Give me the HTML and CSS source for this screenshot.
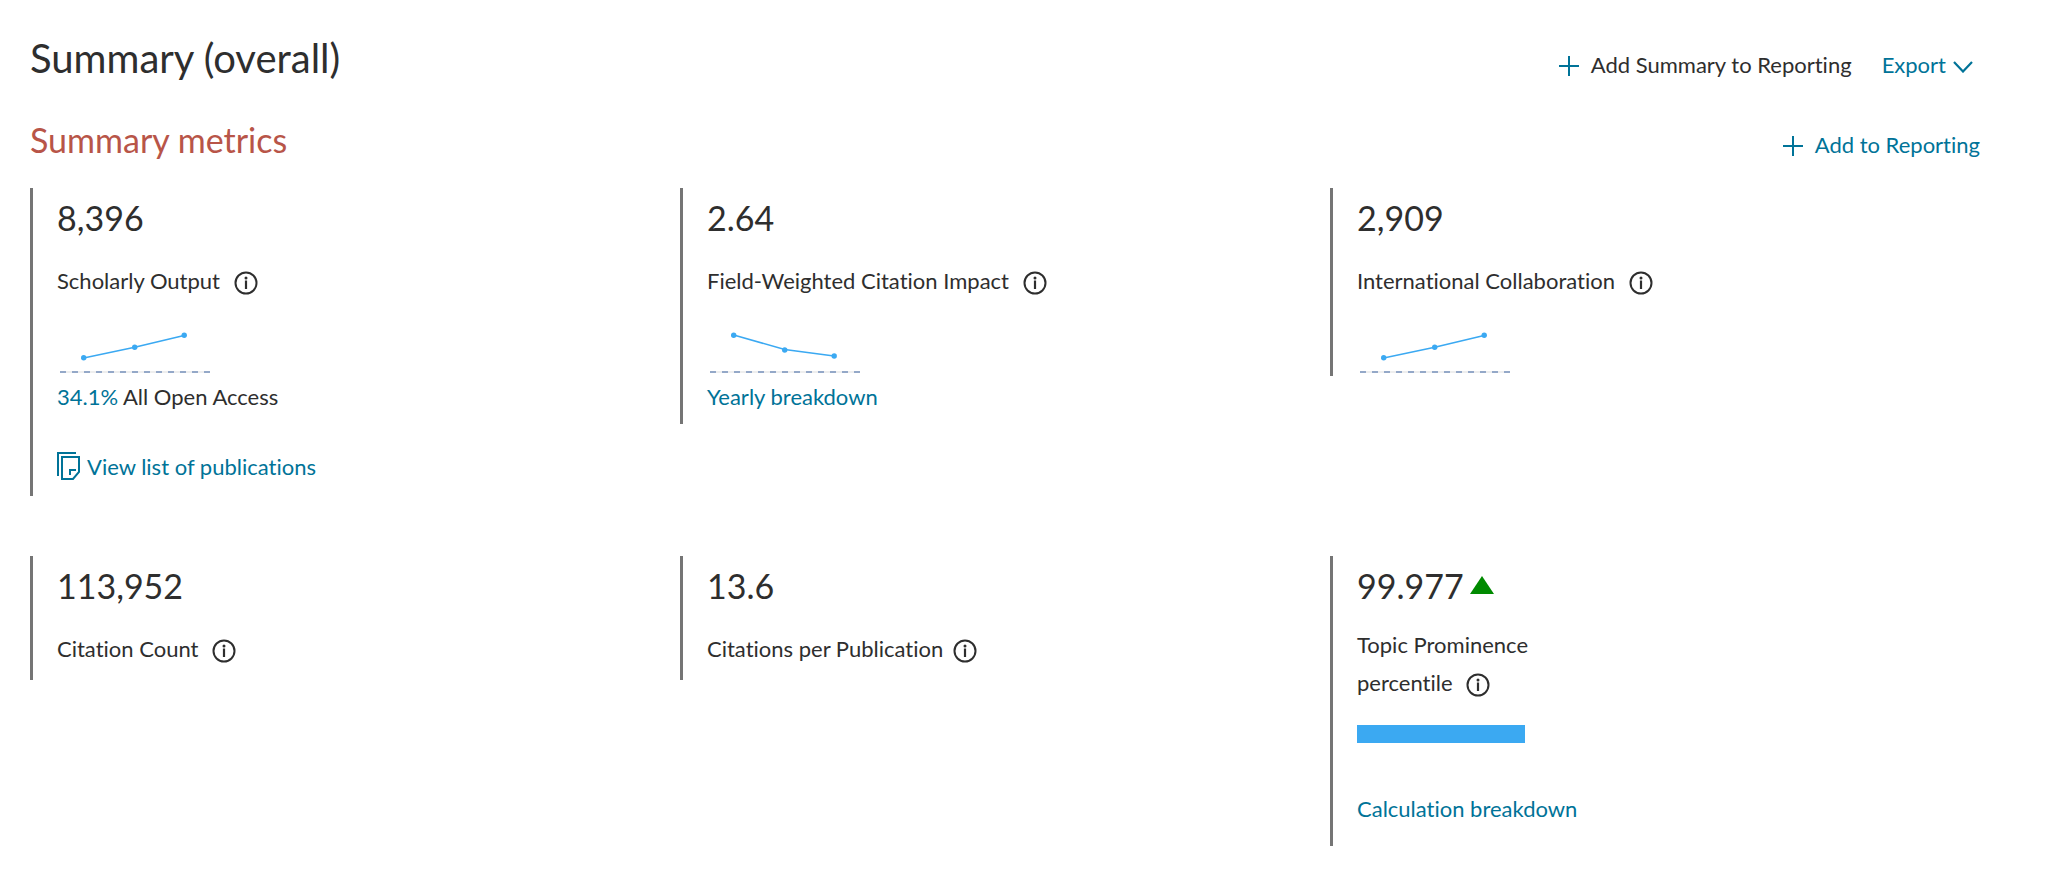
FILE: index.html
```html
<!DOCTYPE html>
<html lang="en">
<head>
<meta charset="utf-8">
<title>Summary (overall)</title>
<link rel="stylesheet" href="styles.css">
</head>
<body>
<svg class="sprite" aria-hidden="true">
  <symbol id="plus" viewBox="0 0 20 20"><path d="M10 0V20M0 10H20" fill="none" stroke="currentColor" stroke-width="2"/></symbol>
  <symbol id="info" viewBox="0 0 24 24"><circle cx="12" cy="12" r="10.5" fill="none" stroke="currentColor" stroke-width="2"/><path d="M12 9.5V18" stroke="currentColor" stroke-width="2.2"/><circle cx="12" cy="7" r="1.5" fill="currentColor"/></symbol>
  <symbol id="axis" viewBox="0 0 160 76"><path d="M3 72H153" stroke="#eeeeee" stroke-width="2"/><path d="M3 72H9M15 72H21M27 72H33M39 72H45M51 72H57M63 72H69M75 72H81M87 72H93M99 72H105M111 72H117M123 72H129M135 72H141M147 72H153" stroke="#94a8c8" stroke-width="2"/></symbol>
</svg>
<main class="page">
  <header class="bar">
    <h1 class="title">Summary (overall)</h1>
    <div class="actions">
      <button type="button" class="action action-dark"><svg class="plus"><use href="#plus"/></svg>Add Summary to Reporting</button>
      <button type="button" class="action action-menu">Export<svg class="chevron" viewBox="0 0 20 12"><path d="M1 1L10 10.500L19 1" fill="none" stroke="currentColor" stroke-width="2.200"/></svg></button>
    </div>
  </header>
  <section>
    <div class="bar bar-sub">
      <h2 class="subtitle">Summary metrics</h2>
      <button type="button" class="action"><svg class="plus"><use href="#plus"/></svg>Add to Reporting</button>
    </div>
    <div class="metrics">
      <article class="card">
        <p class="value">8,396</p>
        <p class="label">Scholarly Output <button type="button" class="info" aria-label="About Scholarly Output"><svg><use href="#info"/></svg></button></p>
        <svg class="spark" viewBox="0 0 160 76"><use href="#axis"/><g class="trend"><path d="M26.700 58L77.700 47.300L127 35.500"/><circle cx="26.700" cy="57.700" r="2.700"/><circle cx="77.700" cy="47.300" r="2.700"/><circle cx="127.200" cy="35.200" r="2.700"/></g></svg>
        <p class="line"><a href="#access">34.1%</a> All Open Access</p>
        <p class="line line-after"><a class="doc-link" href="#publications"><svg class="docs" viewBox="0 0 24 28"><g fill="none" stroke="currentColor" stroke-width="2"><path d="M1 24V1H19"/><path d="M5 5H22V20L16 27H5Z"/><path d="M13 23V18H19"/></g></svg>View list of publications</a></p>
      </article>
      <article class="card">
        <p class="value">2.64</p>
        <p class="label">Field-Weighted Citation Impact <button type="button" class="info" aria-label="About Field-Weighted Citation Impact"><svg><use href="#info"/></svg></button></p>
        <svg class="spark" viewBox="0 0 160 76"><use href="#axis"/><g class="trend"><path d="M26.700 35L77.700 49.500L127 56"/><circle cx="26.700" cy="35.200" r="2.700"/><circle cx="77.700" cy="50" r="2.700"/><circle cx="127.200" cy="56" r="2.700"/></g></svg>
        <p class="line"><a href="#yearly">Yearly breakdown</a></p>
      </article>
      <article class="card">
        <p class="value">2,909</p>
        <p class="label">International Collaboration <button type="button" class="info" aria-label="About International Collaboration"><svg><use href="#info"/></svg></button></p>
        <svg class="spark" viewBox="0 0 160 76"><use href="#axis"/><g class="trend"><path d="M26.700 58L77.700 47.300L127 35.500"/><circle cx="26.700" cy="57.700" r="2.700"/><circle cx="77.700" cy="47.300" r="2.700"/><circle cx="127.200" cy="35.200" r="2.700"/></g></svg>
      </article>
      <article class="card card-short">
        <p class="value">113,952</p>
        <p class="label">Citation Count <button type="button" class="info" aria-label="About Citation Count"><svg><use href="#info"/></svg></button></p>
      </article>
      <article class="card card-short">
        <p class="value">13.6</p>
        <p class="label">Citations per Publication <button type="button" class="info info-close" aria-label="About Citations per Publication"><svg><use href="#info"/></svg></button></p>
      </article>
      <article class="card card-topic">
        <p class="value">99.977<svg class="up" viewBox="0 0 24 18"><path d="M12 0L24 18H0Z" fill="#008a00"/></svg></p>
        <p class="label label-narrow">Topic Prominence percentile <button type="button" class="info" aria-label="About Topic Prominence percentile"><svg><use href="#info"/></svg></button></p>
        <div class="meter"></div>
        <p class="line"><a href="#calculation">Calculation breakdown</a></p>
      </article>
    </div>
  </section>
</main>
</body>
</html>
```
FILE: styles.css
```css
* { box-sizing: border-box; }
body { margin: 0; background: #fff; color: #2e2e2e; font: 22px/38px Lato, "Noto Sans", sans-serif; font-variant-ligatures: none; }
h1, h2, p { margin: 0; font-weight: 400; }
a { color: #007398; text-decoration: none; }
a:hover { text-decoration: underline; }
button { border: 0; padding: 0; background: none; color: inherit; font: inherit; font-variant-ligatures: none; cursor: pointer; }
.sprite { position: absolute; width: 0; height: 0; }
.page { padding: 34px 67px 22px 30px; }
.bar { display: flex; justify-content: space-between; align-items: baseline; }
.bar-sub { margin: 34px 0 24px; }
.title { font-size: 40px; line-height: 48px; }
.subtitle { font-size: 34px; line-height: 44px; color: #b85548; }
.actions { display: flex; align-items: baseline; gap: 30px; padding-right: 7px; }
.action { color: #007398; white-space: nowrap; }
.action-dark { color: #2e2e2e; }
.plus { width: 20px; height: 20px; margin-right: 12px; vertical-align: -3px; color: #007398; }
.chevron { width: 20px; height: 12px; margin-left: 7px; vertical-align: 0; }
.metrics { display: grid; grid-template-columns: repeat(3, 1fr); row-gap: 60px; align-items: start; }
.card { border-left: 3px solid #757575; padding-left: 24px; }
.value { font-size: 34px; line-height: 60px; margin-bottom: 14px; }
.label-narrow { max-width: 200px; }
.info { margin-left: 8px; line-height: 0; vertical-align: -6px; }
.info-close { margin-left: 4px; }
.info svg { width: 24px; height: 24px; }
.spark { display: block; width: 160px; height: 76px; }
.trend path { fill: none; stroke: #3ba9f2; stroke-width: 1.5px; }
.trend circle { fill: #3ba9f2; }
.line { line-height: 42px; margin-bottom: 6px; }
.line-after { margin: 28px 0 8px; }
.docs { width: 24px; height: 28px; margin-right: 6px; vertical-align: -5px; }
.card-short { padding-bottom: 12px; }
.card-topic { padding-bottom: 10px; }
.card-topic .value { margin-bottom: 10px; }
.up { width: 24px; height: 18px; margin-left: 6px; vertical-align: 5px; }
.meter { width: 168px; height: 18px; margin: 23px 0 45px; background: #3ba9f2; }
```
